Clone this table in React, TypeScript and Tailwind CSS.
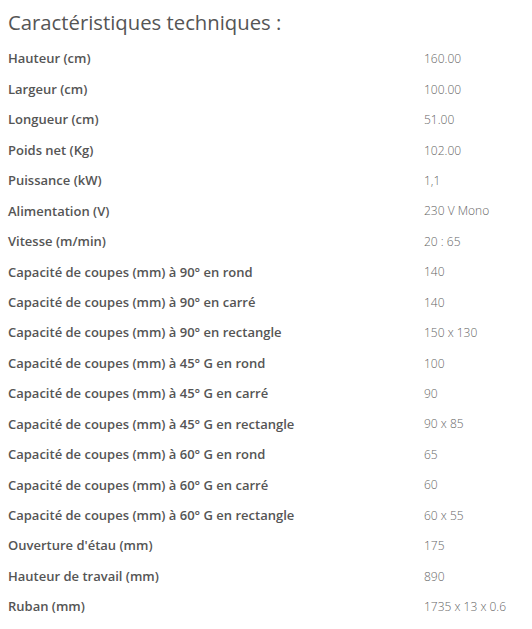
import React from 'react';

const specs: [string, string][] = [
  ['Hauteur (cm)', '160.00'],
  ['Largeur (cm)', '100.00'],
  ['Longueur (cm)', '51.00'],
  ['Poids net (Kg)', '102.00'],
  ['Puissance (kW)', '1,1'],
  ['Alimentation (V)', '230 V Mono'],
  ['Vitesse (m/min)', '20 : 65'],
  ['Capacité de coupes (mm) à 90° en rond', '140'],
  ['Capacité de coupes (mm) à 90° en carré', '140'],
  ['Capacité de coupes (mm) à 90° en rectangle', '150 x 130'],
  ['Capacité de coupes (mm) à 45° G en rond', '100'],
  ['Capacité de coupes (mm) à 45° G en carré', '90'],
  ['Capacité de coupes (mm) à 45° G en rectangle', '90 x 85'],
  ['Capacité de coupes (mm) à 60° G en rond', '65'],
  ['Capacité de coupes (mm) à 60° G en carré', '60'],
  ['Capacité de coupes (mm) à 60° G en rectangle', '60 x 55'],
  ["Ouverture d'étau (mm)", '175'],
  ['Hauteur de travail (mm)', '890'],
  ['Ruban (mm)', '1735 x 13 x 0.6'],
];

export default function App() {
  return (
    <div className="w-[532px] min-h-[629px] bg-white px-2 pt-[9px] font-['Open_Sans',sans-serif]">
      <h2 className="text-[20.3px] leading-[26px] text-[#555] mb-[9px]">Caractéristiques techniques :</h2>
      <div className="flex flex-col">
        {specs.map(([label, value]) => (
          <div key={label} className="flex items-center h-[30.45px]">
            <div className="w-[416px] text-[13px] font-semibold text-[#555]">{label}</div>
            <div className="text-[12px] font-light text-[#666]">{value}</div>
          </div>
        ))}
      </div>
    </div>
  );
}
